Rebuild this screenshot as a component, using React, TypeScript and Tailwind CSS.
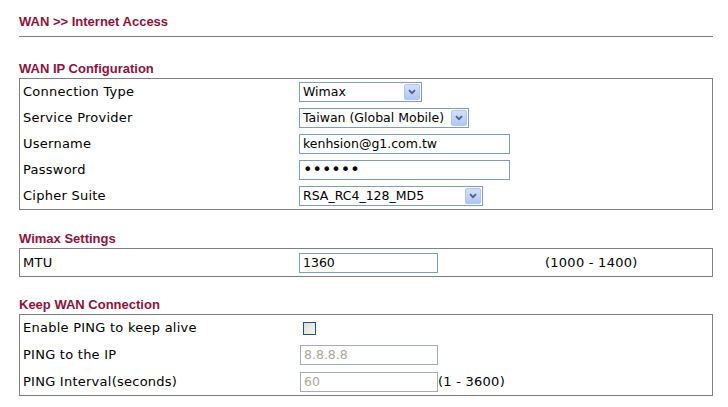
import React from "react";

const LABEL_FONT = "font-['DejaVu_Sans',Verdana,sans-serif]";

function Chevron() {
  return (
    <svg width="8" height="6" viewBox="0 0 8 6" className="block">
      <path d="M1 1.2 L4 4.2 L7 1.2" fill="none" stroke="#4d6185" strokeWidth="1.8" />
    </svg>
  );
}

function Select({ value, width }: { value: string; width: string }) {
  return (
    <div
      className={`flex h-[20px] items-stretch border border-[#7f9db9] bg-white ${width}`}
    >
      <span className="flex-1 truncate pl-[3px] text-[12.5px] leading-[18px] text-black">
        {value}
      </span>
      <span className="my-px mr-px flex w-[16px] items-center justify-center rounded-[2px] border border-[#b4c6ef] bg-gradient-to-b from-[#d3e0fd] to-[#b2c6f5]">
        <Chevron />
      </span>
    </div>
  );
}

function TextInput({
  value,
  width,
  disabled,
  dots,
}: {
  value: string;
  width: string;
  disabled?: boolean;
  dots?: boolean;
}) {
  return (
    <div
      className={`flex h-[20px] items-center border bg-white pl-[3px] text-[12.5px] leading-[18px] ${width} ${
        disabled ? "ml-px border-[#a5acb5] text-[#aca899]" : "border-[#7f9db9] text-black"
      }`}
    >
      {dots ? <span className="text-[16px] leading-[18px]">{value}</span> : value}
    </div>
  );
}

function Row({
  label,
  h = "h-[26px]",
  children,
}: {
  label: string;
  h?: string;
  children: React.ReactNode;
}) {
  return (
    <div className={`flex items-center ${h}`}>
      <div className="w-[279px] pl-[3px] text-[13px] tracking-[0.25px] text-black">{label}</div>
      <div className="flex items-center">{children}</div>
    </div>
  );
}

function Section({
  title,
  className,
  children,
}: {
  title: string;
  className: string;
  children: React.ReactNode;
}) {
  return (
    <section className={className}>
      <h2 className="h-[17px] font-['Liberation_Sans',Arial,sans-serif] text-[13px] font-bold leading-[16px] text-[#8a133d]">
        {title}
      </h2>
      <div className={`border border-[#808080] ${LABEL_FONT}`}>{children}</div>
    </section>
  );
}

export default function App() {
  return (
    <div className="min-h-[407px] w-[728px] bg-white pl-[19px] pt-[14px]">
      <div className="w-[694px]">
        <h1 className="h-[16px] font-['Liberation_Sans',Arial,sans-serif] text-[13px] font-bold leading-[16px] text-[#8a133d]">
          WAN &gt;&gt; Internet Access
        </h1>
        <div className="mt-[6px] h-px bg-[#808080]" />

        <Section title="WAN IP Configuration" className="mt-[24px]">
          <Row label="Connection Type">
            <Select value="Wimax" width="w-[123px]" />
          </Row>
          <Row label="Service Provider">
            <Select value="Taiwan (Global Mobile)" width="w-[170px]" />
          </Row>
          <Row label="Username">
            <TextInput value="kenhsion@g1.com.tw" width="w-[211px]" />
          </Row>
          <Row label="Password">
            <TextInput value="••••••" width="w-[211px]" dots />
          </Row>
          <Row label="Cipher Suite">
            <Select value="RSA_RC4_128_MD5" width="w-[184px]" />
          </Row>
        </Section>

        <Section title="Wimax Settings" className="mt-[21px]">
          <Row label="MTU" h="h-[27px]">
            <TextInput value="1360" width="w-[139px]" />
            <span className="ml-[107px] text-[13px] tracking-[0.25px] text-black">
              (1000 - 1400)
            </span>
          </Row>
        </Section>

        <Section title="Keep WAN Connection" className="mt-[20px]">
          <Row label="Enable PING to keep alive">
            <span className="ml-[4px] block h-[13px] w-[13px] border border-[#1c5180] bg-gradient-to-br from-[#dcdcd7] to-[#f5f5f3]" />
          </Row>
          <Row label="PING to the IP" h="h-[27px]">
            <TextInput value="8.8.8.8" width="w-[138px]" disabled />
          </Row>
          <Row label="PING Interval(seconds)" h="h-[27px]">
            <TextInput value="60" width="w-[138px]" disabled />
            <span className="text-[13px] tracking-[0.25px] text-black">(1 - 3600)</span>
          </Row>
        </Section>
      </div>
    </div>
  );
}
